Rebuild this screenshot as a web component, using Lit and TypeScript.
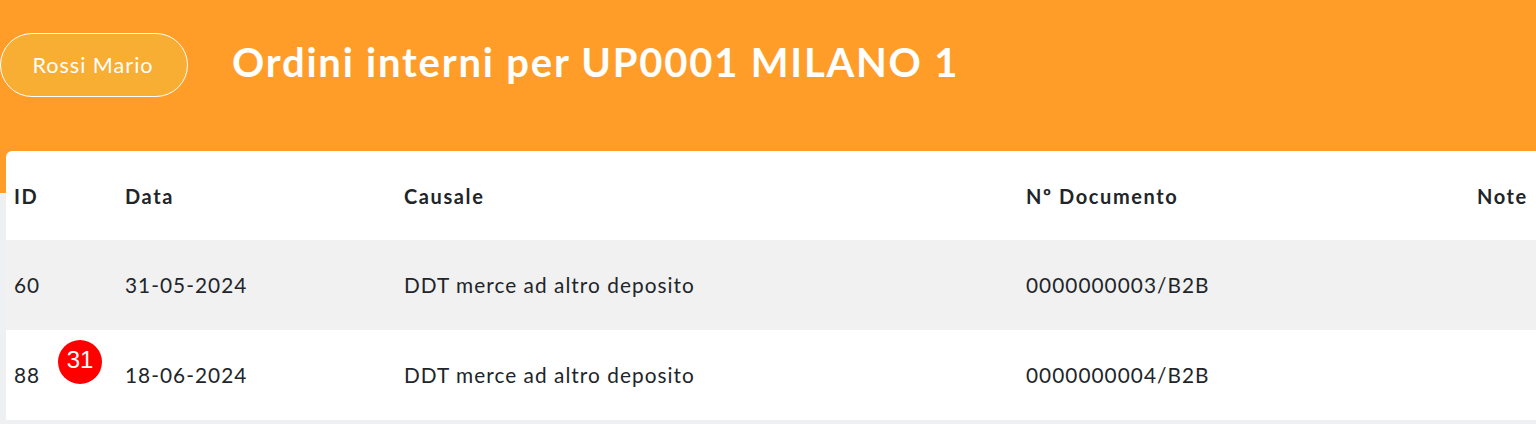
import { LitElement, html, css } from "lit";
import { customElement } from "lit/decorators.js";

@customElement("app-root")
export class AppRoot extends LitElement {
  static styles = css`
    :host {
      display: block;
      height: 424px;
      overflow: hidden;
      background: #eff0f1;
      font-family: Lato, "Liberation Sans", sans-serif;
      color: #212529;
    }
    .header {
      height: 193px;
      box-sizing: border-box;
      background: #ff9d28;
      display: flex;
      align-items: flex-start;
      padding-top: 33px;
      gap: 44px;
    }
    .user {
      width: 188px;
      height: 64px;
      box-sizing: border-box;
      border: 1px solid #fff;
      border-radius: 32px;
      background: #f8ad33;
      color: #fff;
      font-size: 21.6px;
      letter-spacing: 1px;
      padding: 0 2px 0 0;
      display: flex;
      align-items: center;
      justify-content: center;
    }
    h1 {
      margin: 0;
      font-size: 40px;
      line-height: 58px;
      font-weight: 700;
      letter-spacing: 1.78px;
      color: #fff;
    }
    .card {
      margin: -42px 0 0 6px;
      background: #fff;
      border-radius: 6px 0 0 0;
      width: 1530px;
    }
    .row {
      display: grid;
      box-sizing: border-box;
      grid-template-columns: 111px 279px 622px 451px 67px;
      height: 90px;
      align-items: center;
      padding: 0 0 2px 8px;
      font-size: 20.8px;
      letter-spacing: 1.04px;
      white-space: nowrap;
    }
    .row.head {
      height: 89px;
      padding-bottom: 0;
      font-size: 20px;
      font-weight: 700;
      letter-spacing: 1.6px;
    }
    .row.alt {
      background: #f1f1f1;
    }
    .id {
      position: relative;
    }
    .badge {
      position: absolute;
      left: 44px;
      top: -22px;
      width: 44px;
      height: 44px;
      border-radius: 50%;
      background: #ff0000;
      color: #fff;
      font-family: "Liberation Sans", Arial, sans-serif;
      font-size: 24px;
      letter-spacing: 0;
      line-height: 40px;
      text-align: center;
    }
  `;

  render() {
    return html`
      <div class="header">
        <div class="user">Rossi Mario</div>
        <h1>Ordini interni per UP0001 MILANO 1</h1>
      </div>
      <div class="card">
        <div class="row head">
          <div>ID</div>
          <div>Data</div>
          <div>Causale</div>
          <div>Nº Documento</div>
          <div>Note</div>
        </div>
        <div class="row alt">
          <div>60</div>
          <div>31-05-2024</div>
          <div>DDT merce ad altro deposito</div>
          <div>0000000003/B2B</div>
          <div></div>
        </div>
        <div class="row">
          <div class="id">88<span class="badge">31</span></div>
          <div>18-06-2024</div>
          <div>DDT merce ad altro deposito</div>
          <div>0000000004/B2B</div>
          <div></div>
        </div>
      </div>
    `;
  }
}
